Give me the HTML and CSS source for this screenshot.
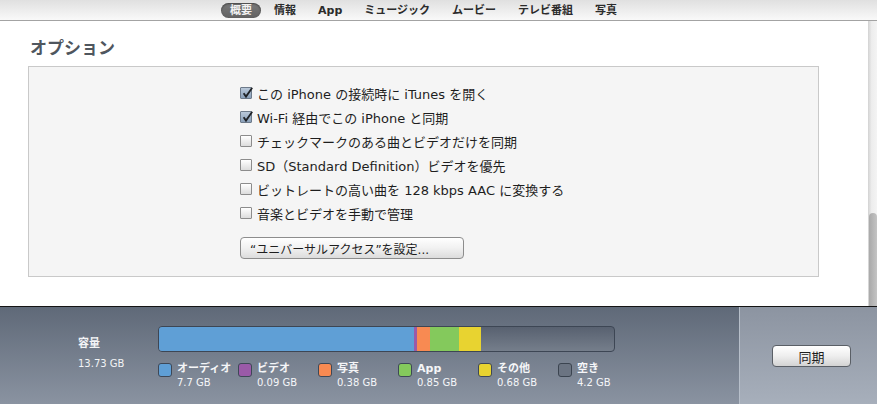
FILE: index.html
```html
<!DOCTYPE html>
<html lang="ja">
  <head>
    <meta charset="UTF-8" />
    <title>概要 - オプション</title>
    <link rel="stylesheet" href="styles.css">
  </head>
  <body>
    <div class="topbar">
      <nav class="tabs">
        <span class="tab active">概要</span>
        <span class="tab">情報</span>
        <span class="tab">App</span>
        <span class="tab">ミュージック</span>
        <span class="tab">ムービー</span>
        <span class="tab">テレビ番組</span>
        <span class="tab">写真</span>
      </nav>
    </div>

    <div class="main">
      <div class="content">
        <h2>オプション</h2>
        <div class="panel">
          <ul class="options">
            <li>
              <span class="box checked"><svg viewBox="0 0 12 12"><path d="M2.6 6.2 L5 9.6 L11.2 0.8" /></svg></span>
              この iPhone の接続時に iTunes を開く
            </li>
            <li>
              <span class="box checked"><svg viewBox="0 0 12 12"><path d="M2.6 6.2 L5 9.6 L11.2 0.8" /></svg></span>
              Wi-Fi 経由でこの iPhone と同期
            </li>
            <li><span class="box"></span>チェックマークのある曲とビデオだけを同期</li>
            <li><span class="box"></span>SD（Standard Definition）ビデオを優先</li>
            <li><span class="box"></span>ビットレートの高い曲を 128 kbps AAC に変換する</li>
            <li><span class="box"></span>音楽とビデオを手動で管理</li>
          </ul>
          <button class="access-btn">“ユニバーサルアクセス”を設定...</button>
        </div>
      </div>
      <div class="scrollbar"><div class="thumb"></div></div>
    </div>

    <div class="footer">
      <div class="capacity">
        <div class="cap-label">
          <div class="cap-title">容量</div>
          <div class="cap-total">13.73 GB</div>
        </div>
        <div class="cap-chart">
          <div class="bar">
            <div class="seg audio" style="width: 255px"></div>
            <div class="seg video" style="width: 3px"></div>
            <div class="seg photo" style="width: 13px"></div>
            <div class="seg app" style="width: 29px"></div>
            <div class="seg other" style="width: 22px"></div>
          </div>
          <div class="legend">
            <div class="item"><span class="swatch audio"></span><div><b>オーディオ</b><span>7.7 GB</span></div></div>
            <div class="item"><span class="swatch video"></span><div><b>ビデオ</b><span>0.09 GB</span></div></div>
            <div class="item"><span class="swatch photo"></span><div><b>写真</b><span>0.38 GB</span></div></div>
            <div class="item"><span class="swatch app"></span><div><b>App</b><span>0.85 GB</span></div></div>
            <div class="item"><span class="swatch other"></span><div><b>その他</b><span>0.68 GB</span></div></div>
            <div class="item"><span class="swatch free"></span><div><b>空き</b><span>4.2 GB</span></div></div>
          </div>
        </div>
      </div>
      <div class="sync-area">
        <button class="sync-btn">同期</button>
      </div>
    </div>
  </body>
</html>
```

FILE: styles.css
```css
body {
  margin: 0;
  width: 877px;
  height: 404px;
  overflow: hidden;
  font-family: "DejaVu Sans", "Noto Sans CJK JP", sans-serif;
  background: #fff;
}

/* Top tab bar */
.topbar {
  height: 20px;
  border-bottom: 1px solid #a3a3a3;
  background: linear-gradient(#e0e0e0, #f9f9f9);
}
.tabs {
  display: flex;
  align-items: center;
  height: 20px;
  padding-left: 221px;
  gap: 4px;
}
.tab {
  font-size: 11px;
  font-weight: bold;
  color: #2b2b2b;
  padding: 1px 9px;
  line-height: 13px;
}
.tab.active {
  background: linear-gradient(#7a7a7a, #626262);
  color: #f2f2f2;
  border-radius: 8px;
  box-shadow: inset 0 1px 2px rgba(0, 0, 0, 0.45);
}

/* Main page */
.main {
  display: flex;
  height: 285px;
}
.content {
  flex: 1;
  padding: 17px 49px 0 28px;
}
h2 {
  margin: 0 0 8px 2px;
  font-size: 17px;
  line-height: 20px;
  font-weight: bold;
  color: #4f565e;
}
.panel {
  height: 195px;
  background: #f5f5f5;
  border: 1px solid #c9c9c9;
  padding: 14px 0 0 211px;
}
.options {
  list-style: none;
  margin: 0;
  padding: 0;
}
.options li {
  display: flex;
  align-items: center;
  height: 24px;
  font-size: 13px;
  color: #1e1e1e;
}
.box {
  width: 10px;
  height: 10px;
  margin-right: 5px;
  border: 1px solid #8c8c8c;
  border-radius: 1px;
  background: linear-gradient(#ffffff, #dcdcdc);
  position: relative;
  flex-shrink: 0;
}
.box.checked {
  border-color: #6d7a8a;
  background: linear-gradient(#b9c8d9, #8aa0b9);
}
.box svg {
  position: absolute;
  left: 0;
  top: -1px;
  width: 12px;
  height: 12px;
  fill: none;
  stroke: #1f2226;
  stroke-width: 1.8;
}
.access-btn {
  margin-top: 12px;
  width: 224px;
  height: 22px;
  text-align: left;
  padding: 0 0 0 9px;
  font-family: "DejaVu Sans", "Noto Sans CJK JP", sans-serif;
  font-size: 12px;
  color: #1e1e1e;
  border: 1px solid #8d8d8d;
  border-radius: 4px;
  background: linear-gradient(#ffffff, #f1f1f1 50%, #dcdcdc);
}

/* Fake scrollbar */
.scrollbar {
  width: 9px;
  background: linear-gradient(90deg, #d2d2d2, #ededed 40%, #f4f4f4);
  position: relative;
}
.thumb {
  position: absolute;
  left: 1px;
  right: 0;
  top: 192px;
  bottom: 0;
  border-radius: 4px 4px 0 0;
  background: linear-gradient(90deg, #a9a9a9, #c4c4c4);
}

/* Bottom capacity bar */
.footer {
  display: flex;
  height: 97px;
  border-top: 1px solid #141414;
  box-shadow: inset 0 2px 3px rgba(0, 0, 0, 0.6);
}
.capacity {
  width: 739px;
  display: flex;
  background: linear-gradient(#5f6978, #8a93a1);
  border-right: 1px solid #b7bfca;
}
.cap-label {
  width: 80px;
  padding: 30px 0 0 78px;
  color: #f3f4f6;
}
.cap-title {
  font-size: 11px;
  font-weight: bold;
  line-height: 14px;
}
.cap-total {
  margin-top: 6px;
  font-size: 10px;
  line-height: 13px;
}
.cap-chart {
  padding-top: 19px;
}
.bar {
  display: flex;
  width: 455px;
  height: 24px;
  border: 1px solid #3d4654;
  border-radius: 4px;
  overflow: hidden;
  background: linear-gradient(#586170, #757e8b);
}
.seg.audio { background: #5f9fd6; }
.seg.video { background: #9a5aa8; }
.seg.photo { background: #f88a52; }
.seg.app { background: #84c95c; }
.seg.other { background: #e8d330; }
.legend {
  display: flex;
  margin-top: 11px;
}
.item {
  display: flex;
  width: 80px;
  color: #f5f6f8;
}
.item div {
  display: flex;
  flex-direction: column;
  margin-left: 5px;
}
.item b {
  font-size: 11px;
  line-height: 14px;
  margin-top: -1px;
}
.item span {
  font-size: 10px;
  line-height: 14px;
}
.swatch {
  width: 12px;
  height: 12px;
  border: 1px solid #3e4857;
  border-radius: 3px;
  flex-shrink: 0;
}
.swatch.audio { background: #5f9fd6; }
.swatch.video { background: #9a5aa8; }
.swatch.photo { background: #f88a52; }
.swatch.app { background: #84c95c; }
.swatch.other { background: #e8d330; }
.swatch.free { background: #6b7482; border-color: #3b4450; }

.sync-area {
  flex: 1;
  padding: 38px 0 0 32px;
  background: linear-gradient(#8c94a1, #a7afbb);
}
.sync-btn {
  width: 79px;
  height: 22px;
  font-family: "DejaVu Sans", "Noto Sans CJK JP", sans-serif;
  font-size: 13px;
  color: #1e1e1e;
  border: 1px solid #5a5f66;
  border-radius: 4px;
  background: linear-gradient(#ffffff, #eeeeee 50%, #d3d3d3);
}
```
